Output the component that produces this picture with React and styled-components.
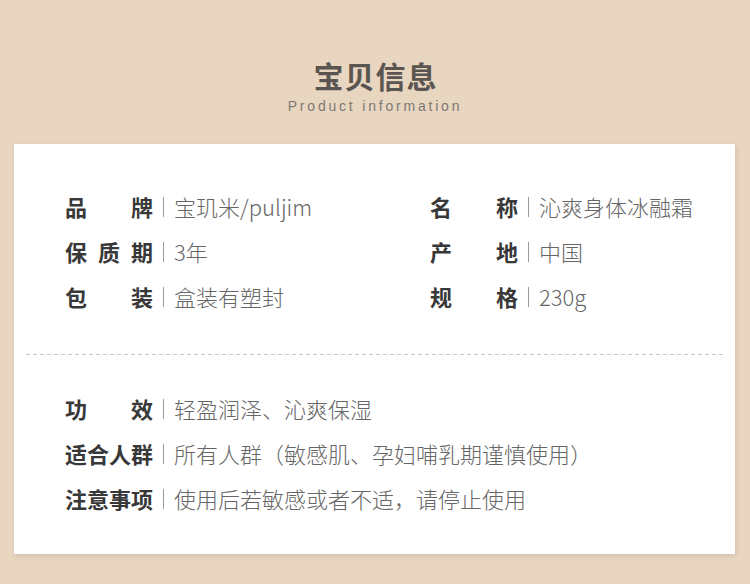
import React from "react";
import styled, { createGlobalStyle } from "styled-components";

const GlobalStyle = createGlobalStyle`
  html, body { margin: 0; padding: 0; background: #e8d6c1; }
  body { font-family: "Noto Sans CJK SC", "Noto Sans", sans-serif; }
`;

const Page = styled.div`
  width: 750px;
  height: 584px;
  background: #e8d6c1;
  padding-top: 57px;
  box-sizing: border-box;
  display: flex;
  flex-direction: column;
  align-items: center;
`;

const Title = styled.h1`
  margin: 0;
  font-size: 30px;
  line-height: 36px;
  font-weight: 700;
  letter-spacing: 1px;
  color: #5a5551;
  padding-left: 1px;
`;

const Subtitle = styled.div`
  margin-top: 4px;
  font-family: "Liberation Sans", "Noto Sans", sans-serif;
  font-size: 14px;
  line-height: 18px;
  letter-spacing: 2.8px;
  color: #7d7874;
`;

const Card = styled.section`
  margin-top: 29px;
  align-self: flex-start;
  margin-left: 14px;
  width: 721px;
  background: #fff;
  box-shadow: 1px 2px 5px rgba(120, 90, 60, 0.18);
  padding: 39px 0 34px;
  box-sizing: border-box;
`;

const Grid = styled.div`
  display: grid;
  grid-template-columns: ${(p) => (p.$cols === 2 ? "365px 1fr" : "1fr")};
  padding-left: 51px;
`;

const Row = styled.div`
  display: flex;
  align-items: center;
  height: 45px;
  font-size: 22px;
  white-space: nowrap;
`;

const Label = styled.span`
  width: 88px;
  flex: none;
  font-weight: 700;
  color: #383838;
  text-align: justify;
  text-align-last: justify;
`;

const Bar = styled.span`
  width: 1px;
  height: 20px;
  background: #9a9a9a;
  margin: 2px 10px 0;
  flex: none;
`;

const Value = styled.span`
  color: #666;
  font-weight: 300;
`;

const Divider = styled.div`
  margin: 36px 12px 30px;
  height: 1px;
  background-image: repeating-linear-gradient(
    to right,
    #c8c8c8 0,
    #c8c8c8 4px,
    transparent 4px,
    transparent 7px
  );
`;

const top = [
  ["品牌", "宝玑米/puljim"],
  ["名称", "沁爽身体冰融霜"],
  ["保质期", "3年"],
  ["产地", "中国"],
  ["包装", "盒装有塑封"],
  ["规格", "230g"],
];

const bottom = [
  ["功效", "轻盈润泽、沁爽保湿"],
  ["适合人群", "所有人群（敏感肌、孕妇哺乳期谨慎使用）"],
  ["注意事项", "使用后若敏感或者不适，请停止使用"],
];

const Item = ({ label, value }) => (
  <Row>
    <Label>{label.length < 4 ? label.split("").join(" ") : label}</Label>
    <Bar />
    <Value>{value}</Value>
  </Row>
);

export default function App() {
  return (
    <>
      <GlobalStyle />
      <Page>
        <Title>宝贝信息</Title>
        <Subtitle>Product information</Subtitle>
        <Card>
          <Grid $cols={2}>
            {top.map(([l, v]) => (
              <Item key={l} label={l} value={v} />
            ))}
          </Grid>
          <Divider />
          <Grid $cols={1}>
            {bottom.map(([l, v]) => (
              <Item key={l} label={l} value={v} />
            ))}
          </Grid>
        </Card>
      </Page>
    </>
  );
}
